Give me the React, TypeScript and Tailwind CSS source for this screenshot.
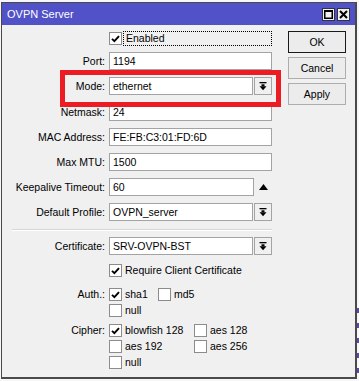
import type { ReactNode } from "react";

function Field({ value, className = "w-[163px]" }: { value: string; className?: string }) {
  return (
    <div className={`h-[18px] bg-white border border-[#a3a3a3] pl-[3px] flex items-center ${className}`}>
      {value}
    </div>
  );
}

function DropButton() {
  return (
    <div className="w-[18px] h-[18px] ml-[1px] border border-[#a3a3a3] bg-[#f0f0f0] flex items-center justify-center">
      <svg width="8" height="9" viewBox="0 0 8 9">
        <rect x="0.5" y="0" width="7" height="1.3" fill="#000" />
        <rect x="2.5" y="2.3" width="3" height="2" fill="#000" />
        <path d="M0.5 4.3H7.5L4 8.3Z" fill="#000" />
      </svg>
    </div>
  );
}

function Combo({ value }: { value: string }) {
  return (
    <div className="flex">
      <Field value={value} className="w-[144px]" />
      <DropButton />
    </div>
  );
}

function Check({ checked = false }: { checked?: boolean }) {
  return (
    <div className="w-[13px] h-[13px] shrink-0 bg-white border border-[#8c8c8c] flex items-center justify-center">
      {checked && (
        <svg width="9" height="8" viewBox="0 0 9 8">
          <path d="M1 3.8L3.4 6.2L8 1.2" stroke="#000" strokeWidth="1.9" fill="none" />
        </svg>
      )}
    </div>
  );
}

function CheckItem({ label, checked, className = "" }: { label: string; checked?: boolean; className?: string }) {
  return (
    <div className={`flex items-center h-[13px] ${className}`}>
      <Check checked={checked} />
      <span className="ml-[3px]">{label}</span>
    </div>
  );
}

function Row({ label, children, className = "" }: { label?: string; children: ReactNode; className?: string }) {
  return (
    <div className={`flex items-center ${className}`}>
      <div className="w-[103px] text-right whitespace-nowrap">{label}</div>
      <div className="ml-[4px] flex items-center">{children}</div>
    </div>
  );
}

function WinButton({ label, primary }: { label: string; primary?: boolean }) {
  return (
    <div
      className={`w-[58px] h-[22px] flex items-center justify-center bg-[#ececec] border ${
        primary ? "border-[#1a1a1a]" : "border-[#adadad]"
      }`}
    >
      {label}
    </div>
  );
}

export default function App() {
  return (
    <div className="w-[359px] h-[381px] bg-[#f7f7f7] flex overflow-hidden font-['Liberation_Sans',Arial,sans-serif] text-[10.5px] leading-[13px] text-black">
      <div className="ml-[1px] mt-[2px] w-[356px] h-[377px] shrink-0 border border-[#4a4a4a] border-r-2 border-b-2 bg-[#f0f0f0] relative flex flex-col overflow-hidden">
        {/* Title bar */}
        <div className="h-[22px] shrink-0 bg-[#5151c8] flex items-center pl-[5px] pr-[5px]">
          <span className="text-white text-[11px]">OVPN Server</span>
          <div className="ml-auto flex gap-[2px]">
            <div className="w-[13px] h-[13px] bg-[#f0f0f0] border border-[#333] flex items-center justify-center">
              <svg width="9" height="9" viewBox="0 0 9 9">
                <rect x="0.75" y="0.75" width="7.5" height="7.5" fill="none" stroke="#000" strokeWidth="1.5" />
                <rect x="0" y="0" width="9" height="2" fill="#000" />
              </svg>
            </div>
            <div className="w-[13px] h-[13px] bg-[#f0f0f0] border border-[#333] flex items-center justify-center">
              <svg width="9" height="9" viewBox="0 0 9 9">
                <path d="M1 1L8 8M8 1L1 8" stroke="#000" strokeWidth="2" />
              </svg>
            </div>
          </div>
        </div>

        {/* Body */}
        <div className="flex">
          <div className="w-[270px] flex flex-col">
            <Row className="mt-[6px] h-[15px]">
              <Check checked />
              <div className="ml-[1px] w-[149px] h-[15px] border border-dotted border-black flex items-center pl-[2px]">
                Enabled
              </div>
            </Row>
            <Row label="Port:" className="mt-[6px]">
              <Field value="1194" />
            </Row>
            <Row label="Mode:" className="mt-[7px]">
              <Combo value="ethernet" />
            </Row>
            <Row label="Netmask:" className="mt-[8px]">
              <Field value="24" />
            </Row>
            <Row label="MAC Address:" className="mt-[7px]">
              <Field value="FE:FB:C3:01:FD:6D" />
            </Row>
            <Row label="Max MTU:" className="mt-[7px]">
              <Field value="1500" />
            </Row>
            <Row label="Keepalive Timeout:" className="mt-[7px]">
              <Field value="60" className="w-[145px]" />
              <svg className="ml-[5px]" width="9" height="6" viewBox="0 0 9 6">
                <path d="M0 6L4.5 0L9 6Z" fill="#000" />
              </svg>
            </Row>
            <Row label="Default Profile:" className="mt-[7px]">
              <Combo value="OVPN_server" />
            </Row>
            <div className="ml-[10px] mt-[8px] h-[2px] border-t border-[#d6d6d6] border-b border-b-white" />
            <Row label="Certificate:" className="mt-[6px]">
              <Combo value="SRV-OVPN-BST" />
            </Row>
            <Row className="mt-[9px]">
              <CheckItem label="Require Client Certificate" checked />
            </Row>
            <Row label="Auth.:" className="mt-[11px]">
              <CheckItem label="sha1" checked className="w-[49px]" />
              <CheckItem label="md5" />
            </Row>
            <Row className="mt-[3px]">
              <CheckItem label="null" />
            </Row>
            <Row label="Cipher:" className="mt-[7px]">
              <CheckItem label="blowfish 128" checked className="w-[85px]" />
              <CheckItem label="aes 128" />
            </Row>
            <Row className="mt-[3px]">
              <CheckItem label="aes 192" className="w-[85px]" />
              <CheckItem label="aes 256" />
            </Row>
            <Row className="mt-[3px]">
              <CheckItem label="null" />
            </Row>
          </div>

          <div className="ml-[16px] mt-[6px] flex flex-col gap-[4px]">
            <WinButton label="OK" primary />
            <WinButton label="Cancel" />
            <WinButton label="Apply" />
          </div>
        </div>

        {/* highlight annotation */}
        <div className="absolute left-[58px] top-[67px] w-[221px] h-[37px] border-[5px] border-[#ec1c24] pointer-events-none" />
      </div>
      <div className="flex flex-col mt-[308px] gap-[10px]">
        <div className="w-[2px] h-[5px] bg-[#5b4a9a]" />
        <div className="w-[2px] h-[5px] bg-[#5b4a9a]" />
        <div className="w-[2px] h-[5px] bg-[#5b4a9a]" />
        <div className="w-[2px] h-[5px] bg-[#5b4a9a]" />
        <div className="w-[2px] h-[5px] bg-[#5b4a9a]" />
      </div>
    </div>
  );
}
